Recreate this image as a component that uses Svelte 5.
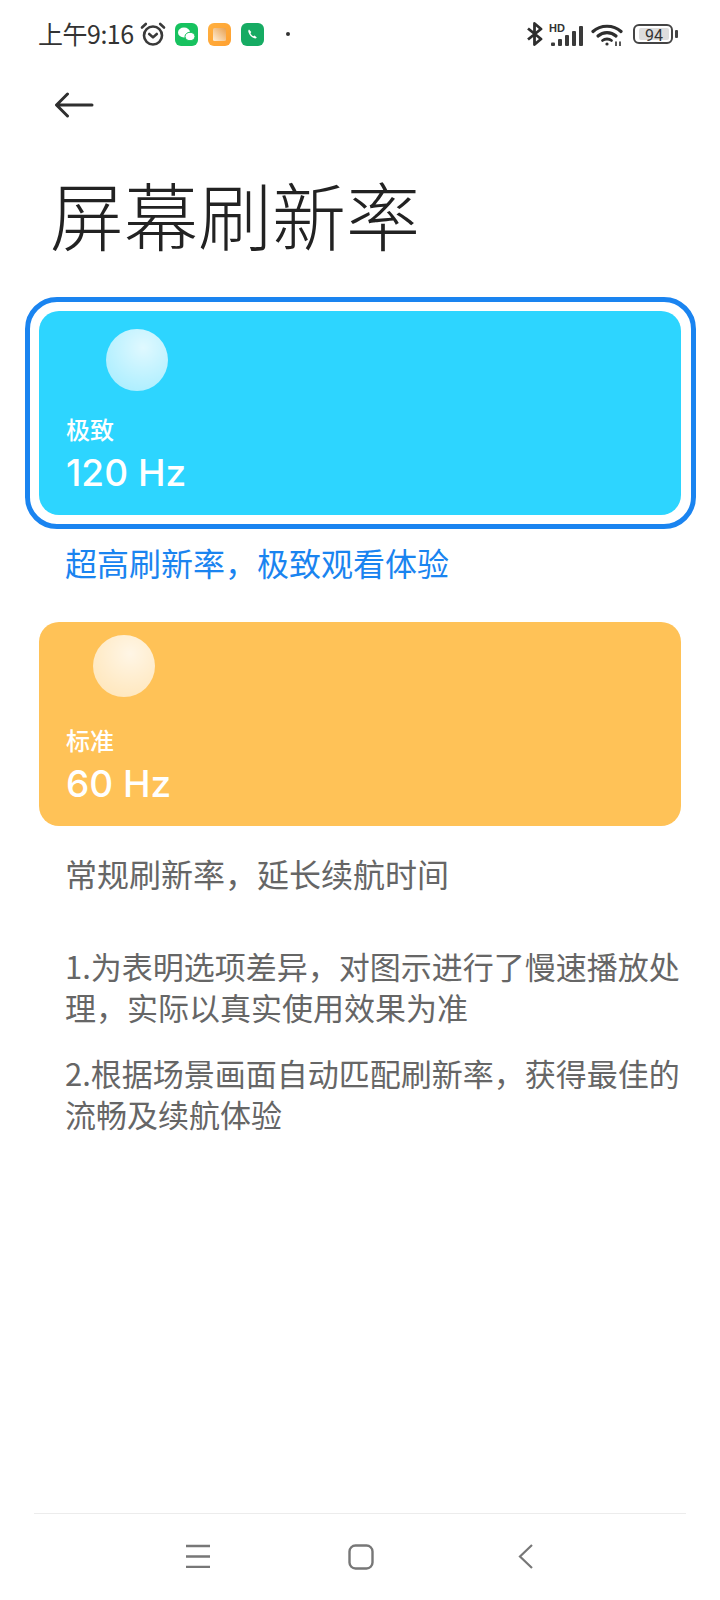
<script>
  const modes = [
    { name: "极致", rate: "120 Hz", note: "超高刷新率，极致观看体验", color: "#2dd5ff", ballX: 40, ballY: 18, selected: true },
    { name: "标准", rate: "60 Hz", note: "常规刷新率，延长续航时间", color: "#ffc257", ballX: 27, ballY: 13, selected: false },
  ];
  const notes = [
    "1.为表明选项差异，对图示进行了慢速播放处理，实际以真实使用效果为准",
    "2.根据场景画面自动匹配刷新率，获得最佳的流畅及续航体验",
  ];
</script>

<div class="page">
  <div class="status">
    <span class="time">上午9:16</span>
    <svg class="alarm" viewBox="0 0 26 24" fill="none" stroke="#3a3a3a" stroke-width="2.600" stroke-linecap="round" stroke-linejoin="round">
      <circle cx="13" cy="13.500" r="9" />
      <path d="M9.200 12l3.800 3.400 3.800-3.400" />
      <path d="M2 5.500 5.800 2M24 5.500 20.200 2" />
    </svg>
    <svg class="app" viewBox="0 0 23 23">
      <rect width="23" height="23" rx="6" fill="#17c25f" />
      <ellipse cx="9" cy="9.500" rx="6" ry="5" fill="#fff" />
      <ellipse cx="15" cy="13.500" rx="5" ry="4.200" fill="#fff" stroke="#17c25f" />
    </svg>
    <svg class="app" viewBox="0 0 23 23">
      <defs>
        <linearGradient id="gal" x1="0" y1="0" x2="1" y2="1">
          <stop offset="0" stop-color="#ffb040" />
          <stop offset="1" stop-color="#ffa030" />
        </linearGradient>
        <linearGradient id="pic" x1="1" y1="0" x2="0" y2="1">
          <stop offset="0" stop-color="#e8a050" />
          <stop offset="1" stop-color="#ffefd8" />
        </linearGradient>
      </defs>
      <rect width="23" height="23" rx="6" fill="url(#gal)" />
      <rect x="5" y="5" width="13" height="13" rx="1.500" fill="url(#pic)" />
    </svg>
    <svg class="app" viewBox="0 0 23 23">
      <rect width="23" height="23" rx="6" fill="#16ab63" />
      <path d="M8 6.500c-.8.6-.9 1.600-.5 2.800.9 2.700 3 5 5.800 6 1 .4 1.900 0 2.500-.8l-2.300-2-1.200.7c-1.200-.6-2.200-1.700-2.800-3l.8-1.100z" fill="#fff" />
    </svg>
    <span class="dot"></span>

    <svg class="bt" viewBox="0 0 17 24" fill="none" stroke="#2e2e2e" stroke-width="2.800" stroke-linejoin="round">
      <path d="M1.500 6.500l13 10.500-6.500 5.500V1.500L14.500 7 1.500 17.500" />
    </svg>
    <div class="signal">
      <span class="hd">HD</span>
      <svg viewBox="0 0 32 20" width="32" height="20" fill="#3a3a3a">
        <rect x="0" y="16.500" width="4" height="3.500" rx="1" />
        <rect x="7" y="13" width="4" height="7" rx="1" />
        <rect x="14" y="9" width="4" height="11" rx="1" />
        <rect x="21" y="5" width="4" height="15" rx="1" />
        <rect x="28" y="0" width="4" height="20" rx="1" />
      </svg>
    </div>
    <svg class="wifi" viewBox="0 0 32 23" fill="none" stroke="#2e2e2e" stroke-width="3.200" stroke-linecap="round">
      <path d="M2 8.500C9.500 1.500 22.500 1.500 30 8.500" />
      <path d="M7 13c5-4.500 13-4.500 18 0" />
      <path d="M11.500 17.500c2.500-2 6.500-2 9 0" stroke-width="2.800" />
      <circle cx="16" cy="21" r="1.600" fill="#2e2e2e" stroke="none" />
      <path d="M25 23v-4M29 23v-4" stroke-width="1.600" />
    </svg>
    <div class="battery">
      <div class="cell"><span class="level">94</span></div>
      <span class="tip"></span>
    </div>
  </div>

  <button class="back" aria-label="返回">
    <svg viewBox="0 0 40 26" width="40" height="26" fill="none" stroke="#2f2f2f" stroke-width="3" stroke-linecap="round" stroke-linejoin="round">
      <path d="M38 13H3M13.500 2 2.500 13l11 11" />
    </svg>
  </button>

  <h1>屏幕刷新率</h1>

  {#each modes as mode}
    <div class="frame" class:selected={mode.selected}>
      <div class="card" style="background: {mode.color}">
        <div class="ball" style="margin: {mode.ballY}px 0 0 {mode.ballX}px"></div>
        <div class="name">{mode.name}</div>
        <div class="rate">{mode.rate}</div>
      </div>
    </div>
    <p class="desc" class:active={mode.selected}>{mode.note}</p>
  {/each}

  <div class="notes">
    {#each notes as note}
      <p>{note}</p>
    {/each}
  </div>

  <nav>
    <svg viewBox="0 0 26 24" width="26" height="24" fill="none" stroke="#777" stroke-width="2.400">
      <path d="M1 2h24M1 12.500h24M1 23h24" />
    </svg>
    <svg viewBox="0 0 26 26" width="26" height="26" fill="none" stroke="#777" stroke-width="2.400">
      <rect x="1.500" y="1.500" width="23" height="23" rx="6" />
    </svg>
    <svg class="nav-back" viewBox="0 0 15 25" width="15" height="25" fill="none" stroke="#777" stroke-width="2.200">
      <path d="M14 1 2 12.500 14 24" />
    </svg>
  </nav>
</div>

<style>
  :global(body) {
    background: #fff;
  }
  .page {
    display: flex;
    flex-direction: column;
    width: 720px;
    height: 1600px;
    overflow: hidden;
    font-family: "Noto Sans CJK SC", "Noto Sans", sans-serif;
  }
  .status {
    display: flex;
    align-items: center;
    height: 24px;
    padding: 22px 0 0 38px;
    color: #333;
  }
  .time {
    font-size: 25px;
    line-height: 22px;
    height: 24px;
    width: 100px;
    white-space: nowrap;
    letter-spacing: -0.5px;
  }
  .alarm {
    width: 26px;
    height: 24px;
    margin: 0 9px 0 2px;
  }
  .app {
    width: 23px;
    height: 23px;
    margin-right: 10px;
  }
  .dot {
    width: 4px;
    height: 4px;
    margin: 0 236px 0 12px;
    background: #333;
    border-radius: 50%;
  }
  .bt {
    width: 18px;
    height: 24px;
    margin-right: 7px;
  }
  .signal {
    position: relative;
    width: 32px;
    height: 24px;
    margin-right: 8px;
  }
  .signal svg {
    position: absolute;
    left: 0;
    bottom: 0;
  }
  .hd {
    position: absolute;
    left: -2px;
    top: 1px;
    font: 700 11px/10px "Liberation Sans", sans-serif;
    color: #333;
  }
  .wifi {
    width: 32px;
    height: 23px;
    margin-right: 10px;
  }
  .battery {
    display: flex;
    align-items: center;
  }
  .cell {
    display: flex;
    width: 40px;
    height: 20px;
    padding: 2px;
    border: 2px solid #444;
    border-radius: 6px;
    box-sizing: border-box;
  }
  .level {
    flex: 1;
    background: #ddd;
    border-radius: 2px;
    margin-left: 2px;
    font: 16px/16px "Roboto", sans-serif;
    color: #333;
    text-align: center;
  }
  .tip {
    width: 3px;
    height: 8px;
    margin-left: 2px;
    background: #444;
    border-radius: 1px;
  }
  .back {
    align-self: flex-start;
    display: flex;
    margin: 46px 0 0 54px;
    padding: 0;
    border: 0;
    background: none;
  }
  h1 {
    margin: 45px 0 48px 50px;
    font-size: 74px;
    line-height: 100px;
    font-weight: 300;
    color: #222;
  }
  .frame {
    margin: 0 39px;
    height: 204px;
    position: relative;
  }
  .frame.selected::before {
    content: "";
    position: absolute;
    inset: -14px -15px -14px -14px;
    border: 5px solid #1a84f0;
    border-radius: 32px;
  }
  .card {
    display: flex;
    flex-direction: column;
    position: relative;
    box-sizing: border-box;
    width: 642px;
    height: 204px;
    border-radius: 20px;
    color: #fff;
    padding-left: 27px;
  }
  .ball {
    width: 62px;
    height: 62px;
    border-radius: 50%;
    background: radial-gradient(circle at 60% 30%, rgba(255, 255, 255, 0.85), rgba(255, 255, 255, 0.55) 100%);
  }
  .name {
    margin-top: auto;
    font-size: 24px;
    font-weight: 500;
    line-height: 32px;
  }
  .rate {
    font: 500 37px/46px Inter, sans-serif;
    margin: 5px 0 19px;
  }
  .desc {
    margin: 26px 0 39px 65px;
    font-size: 32px;
    line-height: 42px;
    color: #666;
  }
  .desc.active {
    color: #1a84f0;
  }
  .notes {
    margin: 12px 30px 0 65px;
    font-size: 31px;
    line-height: 41px;
    color: #666;
  }
  .notes p {
    margin: 0 0 25px;
  }
  nav {
    margin-top: auto;
    margin-inline: 34px;
    height: 87px;
    box-sizing: border-box;
    border-top: 1px solid #ececec;
    display: flex;
    align-items: flex-start;
    gap: 137px;
    padding: 30px 0 0 151px;
  }
  .nav-back {
    margin-left: 7px;
  }
</style>
